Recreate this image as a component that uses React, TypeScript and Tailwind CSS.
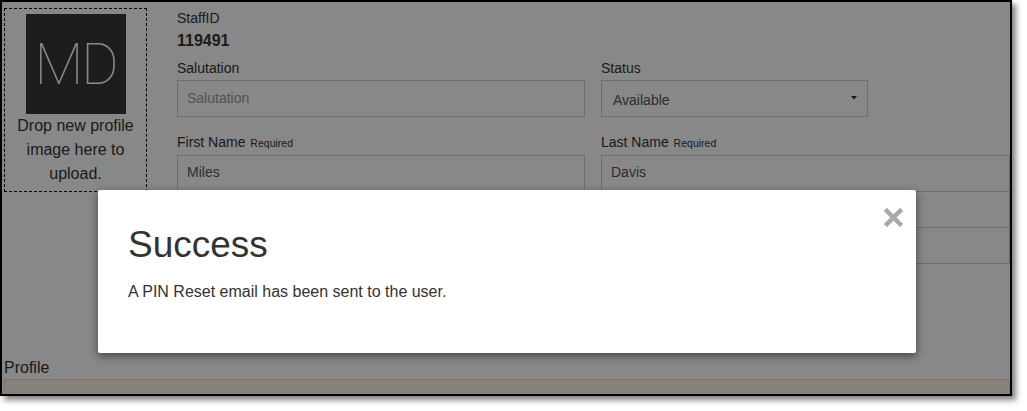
export default function App() {
  return (
    <div className="h-[411px] w-[1027px] bg-white font-['Liberation_Sans',Arial,sans-serif]">
      <div className="relative h-[396px] w-[1012px] overflow-hidden border-2 border-black bg-white shadow-[4px_4px_6px_rgba(0,0,0,0.5)]">
        <StaffPage />
        <div className="absolute inset-0 bg-black/[0.467]" />
        <SuccessModal />
      </div>
    </div>
  );
}

function StaffPage() {
  return (
    <div className="pl-[2px] pt-[6px] text-[#333]">
      <div className="flex items-start">
        <DropZone />
        <div className="ml-[30px] grid grid-cols-[408px_409px] gap-x-4">
          <div className="col-span-2">
            <div className="text-sm leading-5">StaffID</div>
            <div className="mt-px text-base font-bold leading-6">119491</div>
          </div>

          <Field label="Salutation" className="mt-[5px]">
            <div className="flex h-[37px] items-center border border-[#ccc] px-[9px] pb-[2px] text-sm text-[#999]">
              Salutation
            </div>
          </Field>
          <Field label="Status" className="mt-[5px]">
            <div className="flex h-[37px] w-[267px] items-center justify-between border border-[#ccc] pl-[11px] pr-[10px] text-sm text-[#555]">
              <span className="mt-[3px]">Available</span>
              <svg width="6" height="4" viewBox="0 0 6 4" className="-mt-px">
                <polygon points="0,0 6,0 3,3.5" fill="#333" />
              </svg>
            </div>
          </Field>

          <Field label="First Name" required className="mt-[15px]">
            <Input value="Miles" />
          </Field>
          <div className="mt-[15px]">
            <Field label="Last Name" required>
              <Input value="Davis" />
            </Field>
            <div className="-mt-px h-[37px] border border-[#ccc]" />
            <div className="-mt-px h-[37px] border border-[#ccc]" />
          </div>
        </div>
      </div>

      <div className="mt-[92px] text-base leading-[23px]">Profile</div>
      <div className="h-[30px] border border-[#edd6cb] bg-[#fbf6ec]" />
    </div>
  );
}

function DropZone() {
  return (
    <div className="flex h-[184px] w-[143px] flex-col items-center border border-dashed border-black pt-[5px]">
      <div className="flex h-[100px] w-[100px] items-center justify-center bg-[#383838] font-['Roboto',sans-serif] text-[57px] font-thin leading-none tracking-[-2px] text-white">
        MD
      </div>
      <p className="text-center text-base leading-6">
        Drop new profile image here to upload.
      </p>
    </div>
  );
}

function Field({
  label,
  required,
  className,
  children,
}: {
  label: string;
  required?: boolean;
  className?: string;
  children: React.ReactNode;
}) {
  return (
    <div className={className}>
      <div className="mb-[2px] text-sm leading-5">
        {label}
        {required ? <span className="ml-[2px] text-[10.5px]"> Required</span> : null}
      </div>
      {children}
    </div>
  );
}

function Input({ value }: { value: string }) {
  return (
    <div className="flex h-[37px] items-center border border-[#ccc] px-[9px] pb-[3px] text-sm text-[#555]">
      {value}
    </div>
  );
}

function SuccessModal() {
  return (
    <div className="absolute left-[96px] top-[188px] h-[163px] w-[818px] rounded-[2px] bg-white pl-[30px] pt-[35px] text-[#333] shadow-[0_3px_9px_rgba(0,0,0,0.5)]">
      <button
        type="button"
        aria-label="Close"
        className="absolute right-[13px] top-[18px]"
      >
        <svg width="19" height="19" viewBox="0 0 19 19">
          <path
            d="M3 3L16 16M16 3L3 16"
            stroke="#a9a9a9"
            strokeWidth="4.5"
            strokeLinecap="square"
          />
        </svg>
      </button>
      <h2 className="text-[37px] leading-[1.1]">Success</h2>
      <p className="mt-[14px] text-base leading-6">
        A PIN Reset email has been sent to the user.
      </p>
    </div>
  );
}
